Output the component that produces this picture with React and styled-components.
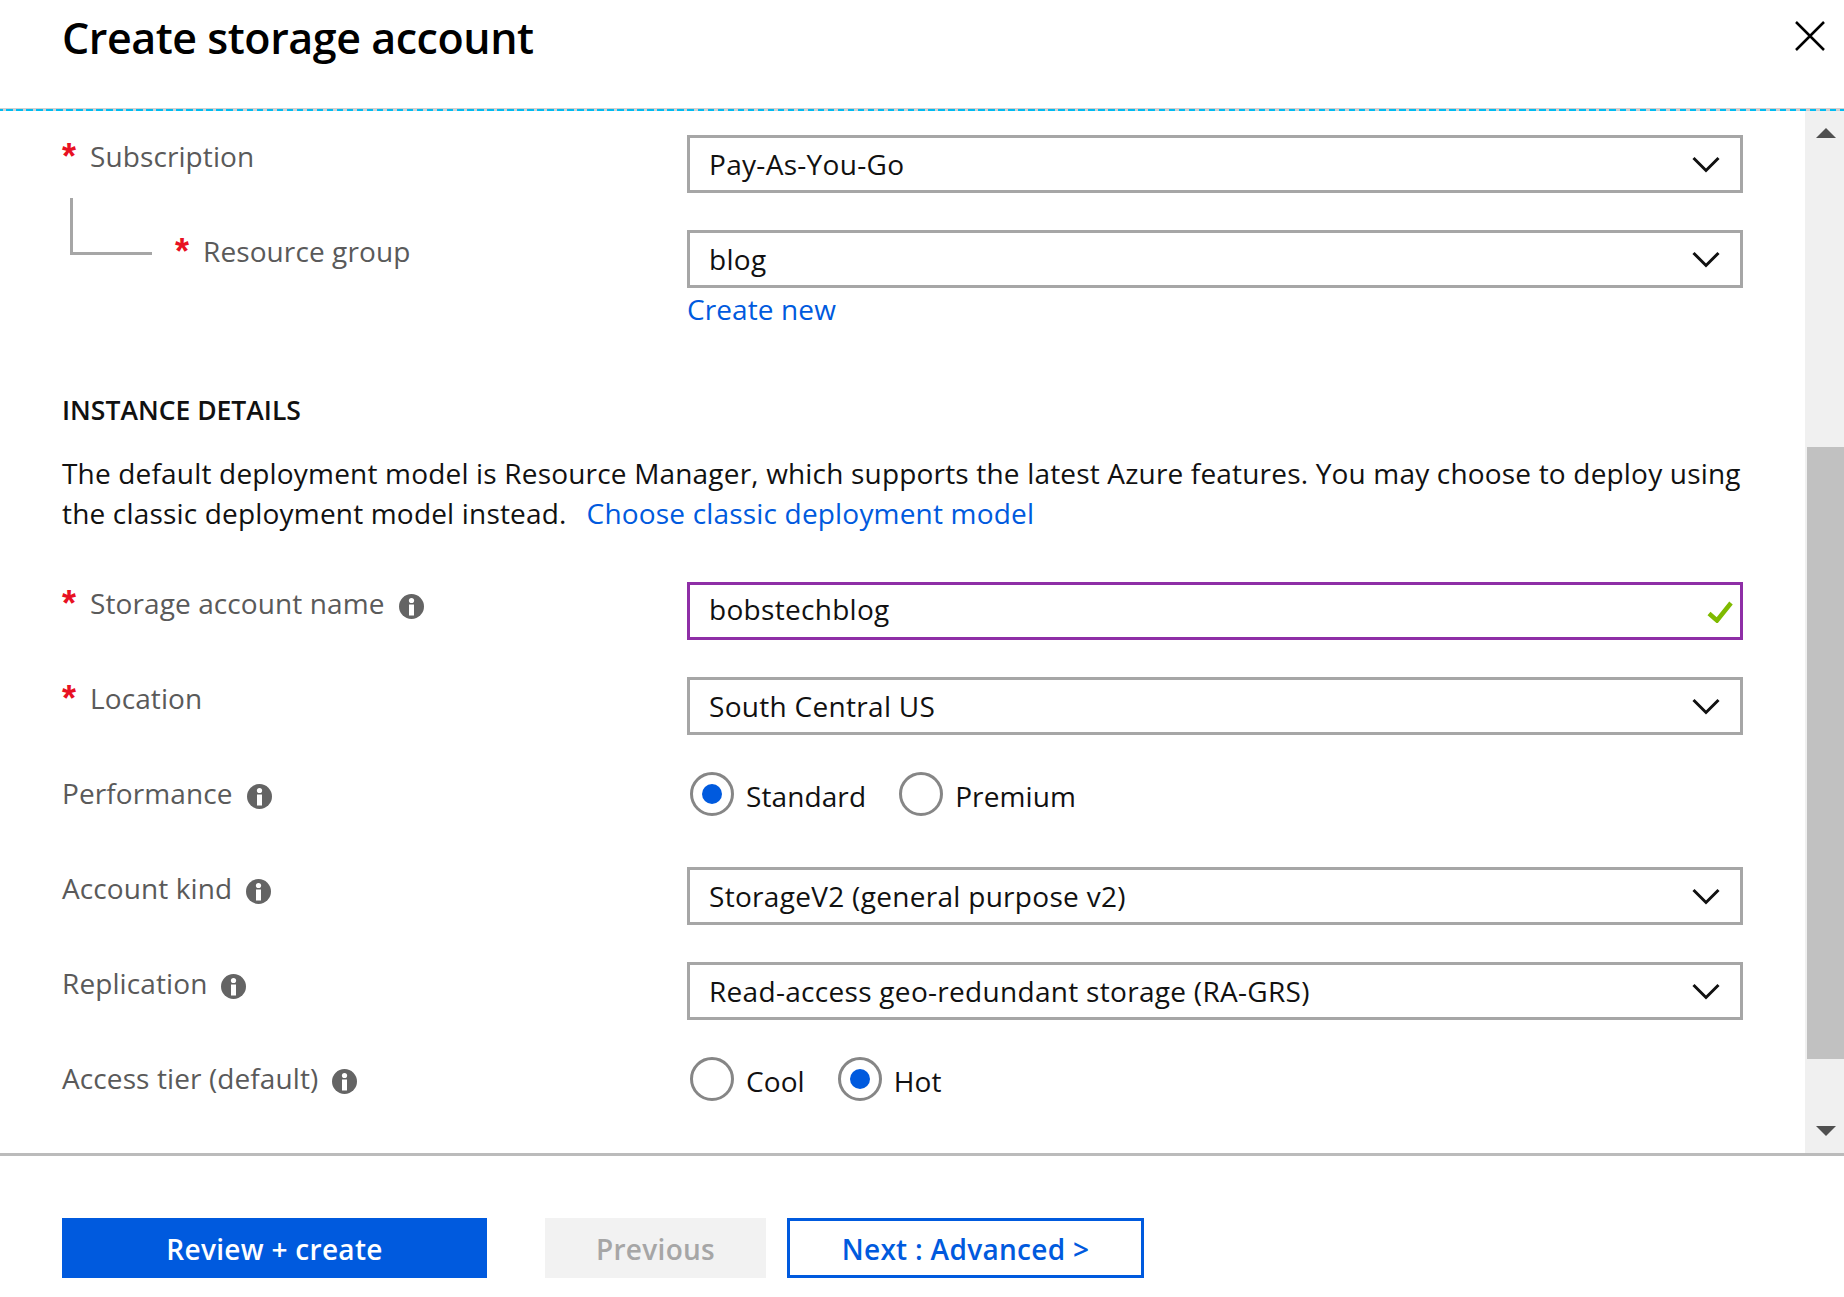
import React from "react";
import styled, { createGlobalStyle } from "styled-components";

const GlobalStyle = createGlobalStyle`
  html, body { margin: 0; padding: 0; background: #fff; }
  body { font-family: "Open Sans", "Noto Sans", sans-serif; }
  * { box-sizing: border-box; }
`;

const Page = styled.div`
  width: 1844px;
  height: 1297px;
  display: flex;
  flex-direction: column;
  overflow: hidden;
  background: #fff;
`;

const Header = styled.header`
  height: 111px;
  padding: 10px 19px 0 62px;
  display: flex;
  justify-content: space-between;
  align-items: flex-start;
  background: linear-gradient(#d0d0d0, #d0d0d0) bottom / 100% 1px no-repeat;
  border-bottom: 2px solid transparent;
  border-image: repeating-linear-gradient(90deg, #00bcf2 0 4.5px, #d0d0d0 4.5px 8px, #00bcf2 8px 10px) 2;
`;

const Title = styled.h1`
  margin: 0;
  font-size: 43px;
  line-height: 56px;
  font-weight: 600;
  letter-spacing: -0.45px;
  color: #000;
`;

const CloseButton = styled.button`
  margin-top: 11px;
  width: 30px;
  height: 30px;
  padding: 0;
  border: 0;
  background: none;
  display: block;
`;

const Body = styled.div`
  height: 1042px;
  display: flex;
`;

const Content = styled.main`
  flex: 1;
  min-width: 0;
  padding: 24px 62px 0;
`;

const Row = styled.div`
  display: grid;
  grid-template-columns: 625px 1056px;
  height: 58px;
  margin-bottom: 37px;
`;

const LabelCell = styled.div`
  display: flex;
  align-items: flex-start;
  height: 44px;
`;

const Connector = styled.span`
  width: 82px;
  height: 57px;
  margin: -32px 23px 0 8px;
  flex: none;
  border-left: 3px solid #a6a6a6;
  border-bottom: 3px solid #a6a6a6;
`;

const Star = styled.span`
  width: 28px;
  flex: none;
  font-family: "Liberation Sans", sans-serif;
  font-size: 36px;
  font-weight: 700;
  line-height: 44px;
  color: #e81123;
`;

const LabelText = styled.span`
  font-size: 28px;
  line-height: 43px;
  color: #5a5a5a;
  letter-spacing: 0.1px;
`;

const InfoIcon = styled.svg`
  width: 25px;
  height: 25px;
  margin: 12px 0 0 14px;
  flex: none;
`;

const Field = styled.div`
  height: 58px;
  padding: 0 20px ${(p) => p.$lift || 0}px 19px;
  display: flex;
  align-items: center;
  justify-content: space-between;
  border: 3px solid ${(p) => p.$color || "#a6a6a6"};
  font-size: 28px;
  color: #111;
  letter-spacing: 0.3px;
`;

const Chevron = styled.svg`
  width: 28px;
  height: 17px;
  flex: none;
`;

const Check = styled.svg`
  width: 26px;
  height: 22px;
  margin-right: -13px;
  margin-top: 6px;
  flex: none;
`;

const CreateLink = styled.a`
  display: block;
  margin: -38px 0 0 625px;
  font-size: 28px;
  line-height: 44px;
  color: #005ade;
  letter-spacing: 0.1px;
`;

const SectionTitle = styled.h2`
  margin: 57px 0 0;
  font-size: 26.5px;
  line-height: 44px;
  font-weight: 600;
  color: #111;
`;

const Paragraph = styled.p`
  margin: 21px 0 49px;
  width: 1692px;
  font-size: 28px;
  line-height: 40px;
  color: #111;
  letter-spacing: 0.18px;
`;

const InlineLink = styled.a`
  margin-left: 20px;
  color: #005ade;
`;

const RadioGroup = styled.div`
  display: flex;
  align-items: flex-start;
  padding-left: 3px;
  gap: 33px;
`;

const RadioOption = styled.label`
  display: flex;
  align-items: flex-start;
  gap: 12px;
  font-size: 28px;
  line-height: 48px;
  color: #111;
  letter-spacing: 0.1px;
`;

const RadioCircle = styled.span`
  width: 44px;
  height: 44px;
  flex: none;
  display: flex;
  align-items: center;
  justify-content: center;
  border: 3px solid #868686;
  border-radius: 50%;
  &::after {
    content: "";
    display: ${(p) => (p.$on ? "block" : "none")};
    width: 20px;
    height: 20px;
    border-radius: 50%;
    background: #005ade;
  }
`;

const Scrollbar = styled.aside`
  width: 39px;
  flex: none;
  background: #f0f0f0;
  padding-top: 17px;
  display: flex;
  flex-direction: column;
`;

const ScrollArrow = styled.svg`
  width: 20px;
  height: 10px;
  margin-left: 11px;
  flex: none;
`;

const ScrollThumb = styled.div`
  height: 612px;
  margin: 309px 0 67px 2px;
  flex: none;
  background: #c1c1c1;
`;

const Footer = styled.footer`
  flex: 1;
  border-top: 3px solid #bbb;
  padding: 62px 0 0 62px;
  display: flex;
  align-items: flex-start;
`;

const Button = styled.button`
  height: 60px;
  width: ${(p) => p.$w}px;
  margin-right: ${(p) => p.$mr || 0}px;
  padding: 2px 0 0;
  font-family: inherit;
  font-size: 28px;
  font-weight: 600;
  letter-spacing: 0.3px;
  background: ${(p) => p.$bg || "#fff"};
  color: ${(p) => p.$fg || "#005ade"};
  border: ${(p) => (p.$outline ? "3px solid #005ade" : "0")};
`;

function Info() {
  return (
    <InfoIcon viewBox="0 0 25 25">
      <circle cx="12.5" cy="12.5" r="12.5" fill="#646464" />
      <circle cx="12.5" cy="6.5" r="2.6" fill="#fff" />
      <rect x="10" y="10.5" width="5" height="11" fill="#fff" />
    </InfoIcon>
  );
}

function Select({ value }) {
  return (
    <Field>
      {value}
      <Chevron viewBox="0 0 28 17">
        <path d="M1.500 2 14 14.500 26.500 2" fill="none" stroke="#111" strokeWidth="3" />
      </Chevron>
    </Field>
  );
}

function Label({ text, required, info }) {
  return (
    <LabelCell>
      {required && <Star>*</Star>}
      <LabelText>{text}</LabelText>
      {info && <Info />}
    </LabelCell>
  );
}

function Radio({ label, on }) {
  return (
    <RadioOption>
      <RadioCircle $on={on} />
      {label}
    </RadioOption>
  );
}

export default function App() {
  return (
    <Page>
      <GlobalStyle />
      <Header>
        <Title>Create storage account</Title>
        <CloseButton aria-label="Close">
          <svg width="30" height="30" viewBox="0 0 30 30">
            <path d="M1 1 29 29M29 1 1 29" stroke="#000" strokeWidth="2.500" fill="none" />
          </svg>
        </CloseButton>
      </Header>
      <Body>
        <Content>
          <Row>
            <Label text="Subscription" required />
            <Select value="Pay-As-You-Go" />
          </Row>
          <Row>
            <LabelCell>
              <Connector />
              <Star>*</Star>
              <LabelText>Resource group</LabelText>
            </LabelCell>
            <Select value="blog" />
          </Row>
          <CreateLink>Create new</CreateLink>
          <SectionTitle>INSTANCE DETAILS</SectionTitle>
          <Paragraph>
            The default deployment model is Resource Manager, which supports the latest Azure features. You may choose to deploy using the classic deployment model instead.
            <InlineLink>Choose classic deployment model</InlineLink>
          </Paragraph>
          <Row>
            <Label text="Storage account name" required info />
            <Field $color="#8e2ea6" $lift={4}>
              bobstechblog
              <Check viewBox="0 0 26 22">
                <path d="M2 12.500 10 19.500 24 2" fill="none" stroke="#7fba00" strokeWidth="4.500" />
              </Check>
            </Field>
          </Row>
          <Row>
            <Label text="Location" required />
            <Select value="South Central US" />
          </Row>
          <Row>
            <Label text="Performance" info />
            <RadioGroup>
              <Radio label="Standard" on />
              <Radio label="Premium" />
            </RadioGroup>
          </Row>
          <Row>
            <Label text="Account kind" info />
            <Select value="StorageV2 (general purpose v2)" />
          </Row>
          <Row>
            <Label text="Replication" info />
            <Select value="Read-access geo-redundant storage (RA-GRS)" />
          </Row>
          <Row>
            <Label text="Access tier (default)" info />
            <RadioGroup>
              <Radio label="Cool" />
              <Radio label="Hot" on />
            </RadioGroup>
          </Row>
        </Content>
        <Scrollbar>
          <ScrollArrow viewBox="0 0 20 10">
            <polygon points="10,0 20,10 0,10" fill="#505050" />
          </ScrollArrow>
          <ScrollThumb />
          <ScrollArrow viewBox="0 0 20 10">
            <polygon points="0,0 20,0 10,10" fill="#505050" />
          </ScrollArrow>
        </Scrollbar>
      </Body>
      <Footer>
        <Button $w={425} $mr={58} $bg="#005ade" $fg="#fff">Review + create</Button>
        <Button $w={221} $mr={21} $bg="#f2f2f2" $fg="#a6a6a6">Previous</Button>
        <Button $w={357} $outline>{"Next : Advanced >"}</Button>
      </Footer>
    </Page>
  );
}
